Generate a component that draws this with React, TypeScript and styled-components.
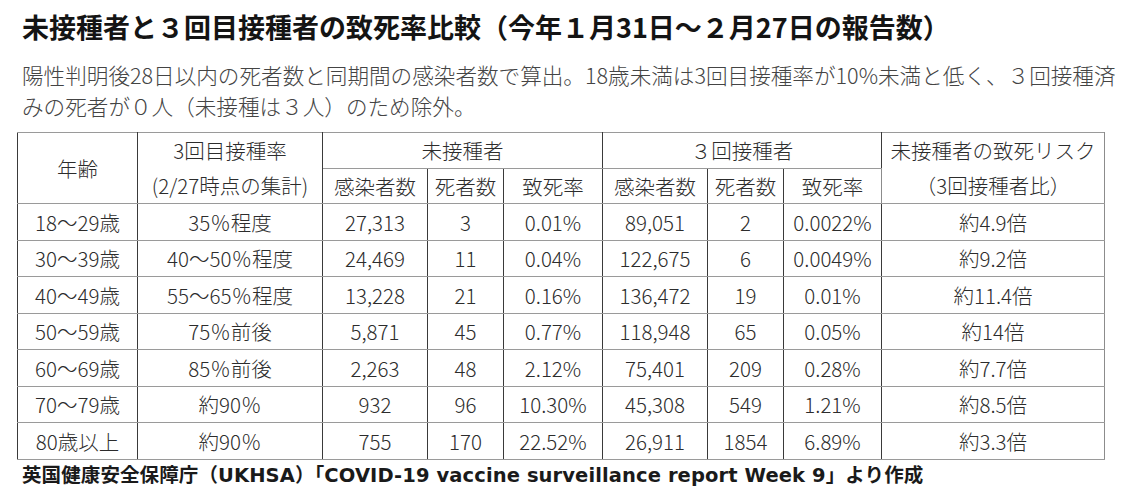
import React from 'react';
import styled, { createGlobalStyle } from 'styled-components';

const GlobalStyle = createGlobalStyle`
    html, body {
        margin: 0;
        padding: 0;
        background: #ffffff;
    }
    body {
        font-family: 'Noto Sans CJK JP', 'Noto Sans', sans-serif;
        color: #333333;
    }
`;

interface IRow {
    age: string;
    rate: string;
    unInfected: string;
    unDeaths: string;
    unFatality: string;
    vInfected: string;
    vDeaths: string;
    vFatality: string;
    risk: string;
}

const rows: IRow[] = [
    { age: '18～29歳', rate: '35％程度', unInfected: '27,313', unDeaths: '3', unFatality: '0.01%', vInfected: '89,051', vDeaths: '2', vFatality: '0.0022%', risk: '約4.9倍' },
    { age: '30～39歳', rate: '40～50％程度', unInfected: '24,469', unDeaths: '11', unFatality: '0.04%', vInfected: '122,675', vDeaths: '6', vFatality: '0.0049%', risk: '約9.2倍' },
    { age: '40～49歳', rate: '55～65％程度', unInfected: '13,228', unDeaths: '21', unFatality: '0.16%', vInfected: '136,472', vDeaths: '19', vFatality: '0.01%', risk: '約11.4倍' },
    { age: '50～59歳', rate: '75％前後', unInfected: '5,871', unDeaths: '45', unFatality: '0.77%', vInfected: '118,948', vDeaths: '65', vFatality: '0.05%', risk: '約14倍' },
    { age: '60～69歳', rate: '85％前後', unInfected: '2,263', unDeaths: '48', unFatality: '2.12%', vInfected: '75,401', vDeaths: '209', vFatality: '0.28%', risk: '約7.7倍' },
    { age: '70～79歳', rate: '約90％', unInfected: '932', unDeaths: '96', unFatality: '10.30%', vInfected: '45,308', vDeaths: '549', vFatality: '1.21%', risk: '約8.5倍' },
    { age: '80歳以上', rate: '約90％', unInfected: '755', unDeaths: '170', unFatality: '22.52%', vInfected: '26,911', vDeaths: '1854', vFatality: '6.89%', risk: '約3.3倍' },
];

const columnWidths = [120, 185, 105, 76, 99, 105, 76, 98, 223];

export default function App() {
    return (
        <>
            <GlobalStyle />
            <Page>
                <Title>未接種者と３回目接種者の致死率比較（今年１月31日～２月27日の報告数）</Title>
                <Lead>
                    陽性判明後28日以内の死者数と同期間の感染者数で算出。18歳未満は3回目接種率が10%未満と低く、３回接種済
                    <br />
                    みの死者が０人（未接種は３人）のため除外。
                </Lead>
                <Table>
                    <colgroup>
                        {columnWidths.map((w, i) => (
                            <col key={i} style={{ width: w }} />
                        ))}
                    </colgroup>
                    <thead>
                        <tr>
                            <HeadCell rowSpan={2}>年齢</HeadCell>
                            <HeadCell rowSpan={2}>
                                <HeadLine>3回目接種率</HeadLine>
                                <HeadLine>(2/27時点の集計)</HeadLine>
                            </HeadCell>
                            <HeadCell colSpan={3} $short>未接種者</HeadCell>
                            <HeadCell colSpan={3} $short>３回接種者</HeadCell>
                            <HeadCell rowSpan={2} $soft>
                                <HeadLine>未接種者の致死リスク</HeadLine>
                                <HeadLine>（3回接種者比）</HeadLine>
                            </HeadCell>
                        </tr>
                        <tr>
                            <HeadCell $short>感染者数</HeadCell>
                            <HeadCell $short>死者数</HeadCell>
                            <HeadCell $short>致死率</HeadCell>
                            <HeadCell $short>感染者数</HeadCell>
                            <HeadCell $short>死者数</HeadCell>
                            <HeadCell $short>致死率</HeadCell>
                        </tr>
                    </thead>
                    <tbody>
                        {rows.map((r) => (
                            <tr key={r.age}>
                                <Cell>{r.age}</Cell>
                                <Cell>{r.rate}</Cell>
                                <Cell>{r.unInfected}</Cell>
                                <Cell>{r.unDeaths}</Cell>
                                <Cell>{r.unFatality}</Cell>
                                <Cell>{r.vInfected}</Cell>
                                <Cell>{r.vDeaths}</Cell>
                                <Cell>{r.vFatality}</Cell>
                                <Cell $soft>{r.risk}</Cell>
                            </tr>
                        ))}
                    </tbody>
                </Table>
                <Source>英国健康安全保障庁（UKHSA）「COVID-19 vaccine surveillance report Week 9」より作成</Source>
            </Page>
        </>
    );
}

const Page = styled.div`
    width: 1135px;
    height: 496px;
    padding: 8px 0 0 0;
    box-sizing: border-box;
    overflow: hidden;
`;

const Title = styled.h1`
    margin: 0 0 0 22px;
    font-size: 27px;
    line-height: 38px;
    font-weight: 700;
    color: #141414;
    white-space: nowrap;
`;

const Lead = styled.p`
    margin: 13px 0 0 22px;
    font-size: 21.6px;
    line-height: 31px;
    font-weight: 300;
    color: #444444;
    white-space: nowrap;
`;

const Table = styled.table`
    margin: 11px 0 0 17px;
    width: 1087px;
    table-layout: fixed;
    border-collapse: collapse;
    font-size: 20.5px;
    font-weight: 300;
    color: #2c2c2c;
`;

const HeadCell = styled.th<{ $short?: boolean; $soft?: boolean }>`
    height: ${({ $short }) => ($short ? '34px' : '70px')};
    padding: 0;
    text-align: center;
    font-weight: 300;
    white-space: nowrap;
    border-top: 1px solid #9a9a9a;
    border-bottom: 1px solid #9a9a9a;
    border-left: 1px solid ${({ $soft }) => ($soft ? '#8c8c8c' : '#3a3a3a')};
    border-right: 1px solid ${({ $soft }) => ($soft ? '#8c8c8c' : '#3a3a3a')};
`;

const HeadLine = styled.div`
    line-height: 35px;
`;

const Cell = styled.td<{ $soft?: boolean }>`
    height: 35.5px;
    padding: 0;
    text-align: center;
    white-space: nowrap;
    border-top: 1px solid #9a9a9a;
    border-bottom: 1px solid #9a9a9a;
    border-left: 1px solid ${({ $soft }) => ($soft ? '#8c8c8c' : '#3a3a3a')};
    border-right: 1px solid ${({ $soft }) => ($soft ? '#8c8c8c' : '#3a3a3a')};
`;

const Source = styled.div`
    margin: 0 0 0 22px;
    font-family: 'DejaVu Sans', 'Noto Sans CJK JP', sans-serif;
    font-size: 19.5px;
    line-height: 31px;
    font-weight: 700;
    color: #1a1a1a;
    white-space: nowrap;
    letter-spacing: 0.1px;
`;
